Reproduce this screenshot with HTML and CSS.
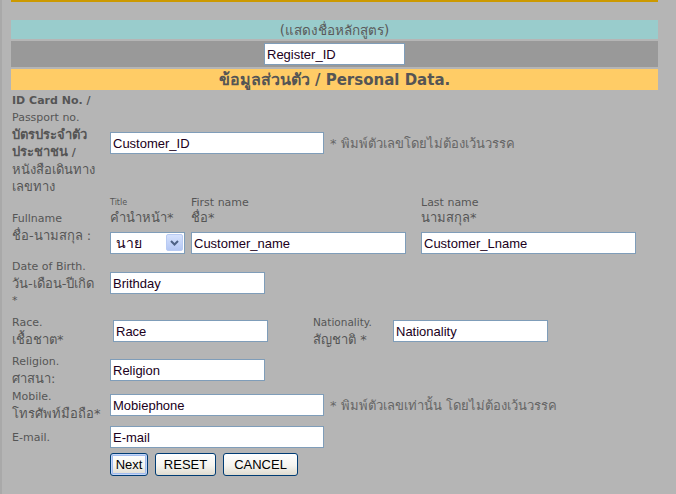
FILE: index.html
```html
<!DOCTYPE html>
<html lang="th">
<head>
<meta charset="utf-8">
<title>Personal Data</title>
<link rel="stylesheet" href="styles.css">
</head>
<body>
<div class="page">
  <div class="topbar"></div>
  <div class="band band-course">(แสดงชื่อหลักสูตร)</div>
  <div class="band band-reg"><input class="txt reg" type="text" value="Register_ID"></div>
  <div class="band band-title"><span class="tt">ข้อมูลส่วนตัว</span>&nbsp;/ Personal Data.</div>

  <div class="form">
    <div class="lbl">
      <span class="b">ID Card No. /</span>
      <span>Passport no.</span>
      <span class="b t">บัตรประจำตัว</span>
      <span class="b"><span class="t">ประชาชน</span> /</span>
      <span class="t">หนังสือเดินทาง</span>
      <span class="t">เลขทาง</span>
    </div>
    <div class="fld">
      <input class="txt w214" type="text" value="Customer_ID">
      <span class="note">* พิมพ์ตัวเลขโดยไม่ต้องเว้นวรรค</span>
    </div>

    <div class="lbl">
      <span>Fullname</span>
      <span class="t">ชื่อ-นามสกุล :</span>
    </div>
    <div class="fld fld-names">
      <div class="names">
        <div class="head">
          <span class="tiny">Title</span>
          <span class="th t">คำนำหน้า*</span>
        </div>
        <div class="head">
          <span class="en">First name</span>
          <span class="th t">ชื่อ*</span>
        </div>
        <div class="head">
          <span class="en">Last name</span>
          <span class="th t">นามสกุล*</span>
        </div>
        <div class="combo">
          <select class="sel"><option>นาย</option><option>นาง</option><option>นางสาว</option></select>
          <span class="arrow"><svg width="17" height="17" viewBox="0 0 17 17"><path d="M5 7 L8.5 10.5 L12 7" fill="none" stroke="#4d6185" stroke-width="2"/></svg></span>
        </div>
        <input class="txt w215" type="text" value="Customer_name">
        <input class="txt w215" type="text" value="Customer_Lname">
      </div>
    </div>

    <div class="lbl">
      <span>Date of Birth.</span>
      <span class="t">วัน-เดือน-ปีเกิด</span>
      <span>*</span>
    </div>
    <div class="fld">
      <input class="txt w155" type="text" value="Brithday">
    </div>

    <div class="lbl">
      <span>Race.</span>
      <span class="t">เชื้อชาต*</span>
    </div>
    <div class="fld">
      <input class="txt w155 shift" type="text" value="Race">
      <div class="lbl lbl-nat">
        <span class="sm">Nationality.</span>
        <span class="t">สัญชาติ *</span>
      </div>
      <input class="txt w155" type="text" value="Nationality">
    </div>

    <div class="lbl">
      <span>Religion.</span>
      <span class="t">ศาสนา:</span>
    </div>
    <div class="fld">
      <input class="txt w155" type="text" value="Religion">
    </div>

    <div class="lbl">
      <span>Mobile.</span>
      <span class="t">โทรศัพท์มือถือ*</span>
    </div>
    <div class="fld">
      <input class="txt w214" type="text" value="Mobiephone">
      <span class="note">* พิมพ์ตัวเลขเท่านั้น โดยไม่ต้องเว้นวรรค</span>
    </div>

    <div class="lbl">
      <span>E-mail.</span>
    </div>
    <div class="fld">
      <input class="txt w214" type="text" value="E-mail">
    </div>

    <div class="lbl"></div>
    <div class="fld buttons">
      <button class="btn btn-next" type="button">Next</button>
      <button class="btn btn-reset" type="reset">RESET</button>
      <button class="btn btn-cancel" type="button">CANCEL</button>
    </div>
  </div>
</div>
</body>
</html>
```

FILE: styles.css
```css
html, body {
  margin: 0;
  padding: 0;
}
body {
  background: #b5b5b5;
  border-left: 2px solid #a9a9a9;
  min-height: 494px;
  box-sizing: border-box;
  font-family: "DejaVu Sans", sans-serif;
  font-size: 11px;
  color: #555555;
}
.page {
  margin-left: 9px;
  width: 647px;
}
.topbar {
  height: 2px;
  background: #cc9900;
  margin-bottom: 18px;
}
.band {
  display: flex;
  align-items: center;
  justify-content: center;
  margin-bottom: 2px;
}
.band-course {
  height: 19px;
  background: #99cccc;
  font-size: 13.5px;
  color: #5a5a5a;
}
.band-reg {
  height: 26px;
  background: #999999;
}
.band-title {
  height: 21px;
  background: #ffcc66;
  font-size: 15px;
  font-weight: bold;
  color: #555555;
  margin-bottom: 1px;
}
.band-title .tt {
  font-size: 16px;
}

.txt {
  box-sizing: border-box;
  height: 22px;
  border: 1px solid #7f9db9;
  background: #ffffff;
  font-family: "Liberation Sans", Arial, sans-serif;
  font-size: 13px;
  color: #200020;
  padding: 0 2px;
  margin: 0;
  outline: none;
}
.reg { width: 141px; }
.w214 { width: 214px; }
.w215 { width: 215px; }
.w155 { width: 155px; }
.shift { margin-left: 3px; }

.form {
  display: grid;
  grid-template-columns: 99px 1fr;
  grid-template-rows: 104px 59px 50px 42px 32px 34px 26px 24px;
  row-gap: 2px;
}
.lbl {
  display: flex;
  flex-direction: column;
  justify-content: center;
  padding-left: 1px;
  line-height: 17px;
  white-space: nowrap;
}
.t { font-size: 13px; }
.b { font-weight: bold; }
.sm { font-size: 10.5px; }
.fld {
  display: flex;
  align-items: center;
}
.note {
  margin-left: 6px;
  font-size: 13px;
  color: #666666;
  white-space: nowrap;
}
.lbl-nat {
  margin-left: 45px;
  width: 80px;
  padding-left: 0;
}

.fld-names {
  align-items: flex-start;
}
.names {
  display: grid;
  grid-template-columns: 81px 230px 215px;
  grid-template-rows: 29px 28px;
  align-items: end;
}
.head {
  display: flex;
  flex-direction: column;
  align-self: start;
}
.head .tiny {
  font-size: 8px;
  line-height: 12px;
}
.head .en {
  line-height: 12px;
}
.head .th {
  line-height: 17px;
}
.combo {
  position: relative;
  width: 75px;
  height: 22px;
}
.sel {
  appearance: none;
  -webkit-appearance: none;
  box-sizing: border-box;
  width: 75px;
  height: 22px;
  margin: 0;
  border: 1px solid #7f9db9;
  border-radius: 0;
  background: #ffffff;
  color: #200020;
  font-family: "Liberation Sans", Arial, sans-serif;
  font-size: 14px;
  padding: 0 0 0 5px;
  outline: none;
}
.arrow {
  position: absolute;
  right: 2px;
  top: 2px;
  width: 17px;
  height: 17px;
  box-sizing: border-box;
  border: 1px solid #b9cbf3;
  border-radius: 2px;
  background: linear-gradient(#d6e2fd, #b4c7f4);
  pointer-events: none;
}
.arrow svg {
  display: block;
  margin: -1px 0 0 -1px;
}

.buttons {
  gap: 7px;
}
.btn {
  box-sizing: border-box;
  height: 23px;
  margin: 0;
  padding: 0;
  border: 1px solid #003c74;
  border-radius: 3px;
  background: linear-gradient(#ffffff 0%, #f5f4ef 55%, #dedbd0 100%);
  font-family: "Liberation Sans", Arial, sans-serif;
  font-size: 13px;
  color: #000000;
}
.btn-next {
  width: 38px;
  box-shadow: inset 0 0 0 1px #c5d6f7, inset 0 0 0 2px #a0bbee;
}
.btn-reset { width: 61px; }
.btn-cancel { width: 75px; }
```
